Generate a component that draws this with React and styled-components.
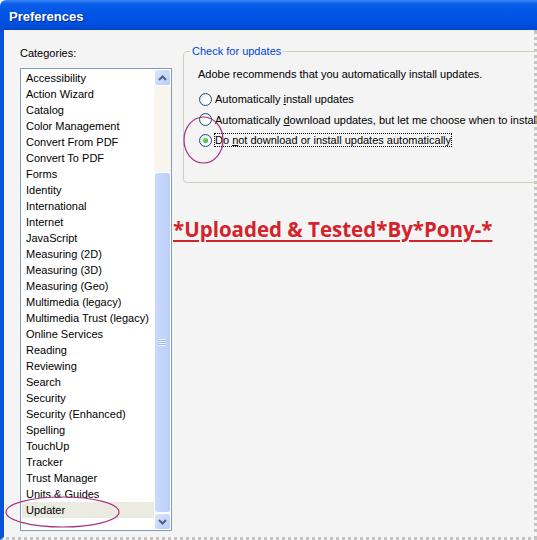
import React from "react";
import styled, { createGlobalStyle } from "styled-components";

const categories = [
  "Accessibility",
  "Action Wizard",
  "Catalog",
  "Color Management",
  "Convert From PDF",
  "Convert To PDF",
  "Forms",
  "Identity",
  "International",
  "Internet",
  "JavaScript",
  "Measuring (2D)",
  "Measuring (3D)",
  "Measuring (Geo)",
  "Multimedia (legacy)",
  "Multimedia Trust (legacy)",
  "Online Services",
  "Reading",
  "Reviewing",
  "Search",
  "Security",
  "Security (Enhanced)",
  "Spelling",
  "TouchUp",
  "Tracker",
  "Trust Manager",
  "Units & Guides",
  "Updater",
];

const Global = createGlobalStyle`
  body {
    margin: 0;
    background: #ffffff;
  }
`;

const App = () => {
  return (
    <Window>
      <Global />
      <TitleBar>
        <Title>Preferences</Title>
      </TitleBar>
      <Body>
        <Sidebar>
          <Label>Categories:</Label>
          <ListBox>
            <List>
              {categories.map((name) => (
                <Item key={name} selected={name === "Updater"}>
                  {name}
                </Item>
              ))}
            </List>
            <ScrollBar>
              <ScrollButton>
                <Arrow viewBox="0 0 9 6">
                  <path d="M1 5 L4.5 1.5 L8 5" />
                </Arrow>
              </ScrollButton>
              <Track />
              <Thumb>
                <Grip />
              </Thumb>
              <ScrollButton>
                <Arrow viewBox="0 0 9 6">
                  <path d="M1 1 L4.5 4.5 L8 1" />
                </Arrow>
              </ScrollButton>
            </ScrollBar>
          </ListBox>
        </Sidebar>
        <Main>
          <Group>
            <Legend>Check for updates</Legend>
            <Note>Adobe recommends that you automatically install updates.</Note>
            <Option>
              <Radio />
              <span>
                Automatically <u>i</u>nstall updates
              </span>
            </Option>
            <Option>
              <Radio />
              <span>
                Automatically <u>d</u>ownload updates, but let me choose when
                to install them
              </span>
            </Option>
            <Option>
              <Radio checked />
              <Focus>
                Do <u>n</u>ot download or install updates automatically
              </Focus>
            </Option>
          </Group>
          <Stamp>*Uploaded &amp; Tested*By*Pony-*</Stamp>
        </Main>
      </Body>
      <Marks width="537" height="540" viewBox="0 0 537 540">
        <ellipse cx="203.5" cy="140" rx="19.5" ry="23" />
        <ellipse cx="62.5" cy="512" rx="56.5" ry="15" />
      </Marks>
    </Window>
  );
};

export default App;

const Window = styled.div`
  position: relative;
  width: 537px;
  height: 540px;
  overflow: hidden;
  display: flex;
  flex-direction: column;
  font-family: "Liberation Sans", Arial, sans-serif;
  font-size: 11px;
  color: #000;
`;

const TitleBar = styled.div`
  height: 30px;
  flex: none;
  box-sizing: border-box;
  display: flex;
  align-items: center;
  padding: 3px 0 0 9px;
  border-radius: 6px 0 0 0;
  background: linear-gradient(
    to bottom,
    #3d86f5 0%,
    #0a5ee8 12%,
    #0055e5 45%,
    #0050e0 80%,
    #0046d0 100%
  );
`;

const Title = styled.span`
  color: #fff;
  font-family: "Liberation Sans", Arial, sans-serif;
  font-weight: bold;
  font-size: 13px;
  text-shadow: 1px 1px 0 #0a2a8a;
`;

const Body = styled.div`
  flex: 1;
  display: flex;
  background: #f4f4f4;
  border-left: 4px solid #0653d9;
  border-right: 3px dotted #c4c4c4;
  border-bottom: 3px dotted #c4c4c4;
  min-height: 0;
`;

const Sidebar = styled.div`
  flex: none;
  display: flex;
  flex-direction: column;
  padding: 16px 0 0 16px;
`;

const Label = styled.div`
  height: 14px;
  line-height: 14px;
  margin-bottom: 8px;
`;

const ListBox = styled.div`
  display: flex;
  width: 150px;
  height: 461px;
  border: 1px solid #7f9db9;
  background: #fff;
`;

const List = styled.ul`
  flex: 1;
  min-width: 0;
  overflow: hidden;
  list-style: none;
  margin: 0;
  padding: 1px 0 0 1px;
`;

const Item = styled.li`
  height: 16px;
  line-height: 16px;
  padding-left: 4px;
  white-space: nowrap;
  background: ${(p) => (p.selected ? "#ecebe1" : "transparent")};
`;

const ScrollBar = styled.div`
  width: 17px;
  flex: none;
  display: flex;
  flex-direction: column;
  background: #fbfaf5;
`;

const ScrollButton = styled.div`
  height: 17px;
  flex: none;
  box-sizing: border-box;
  display: flex;
  align-items: center;
  justify-content: center;
  border: 1px solid #fff;
  border-radius: 3px;
  background: linear-gradient(to bottom right, #dbe6fd, #b8cdf8);
`;

const Arrow = styled.svg`
  width: 9px;
  height: 6px;
  fill: none;
  stroke: #4d6185;
  stroke-width: 2;
`;

const Track = styled.div`
  height: 86px;
  flex: none;
  background: #f8f6ec;
`;

const Thumb = styled.div`
  flex: 1;
  display: flex;
  align-items: center;
  justify-content: center;
  box-sizing: border-box;
  border: 1px solid #fff;
  border-radius: 3px;
  background: linear-gradient(to right, #cbdafc, #bccff9);
`;

const Grip = styled.div`
  width: 7px;
  height: 7px;
  background: repeating-linear-gradient(
    to bottom,
    #eef3fe 0px,
    #eef3fe 1px,
    #9fb7ea 1px,
    #9fb7ea 2px
  );
`;

const Main = styled.div`
  flex: 1;
  min-width: 0;
  padding: 14px 0 0 0;
  display: flex;
  flex-direction: column;
`;

const Group = styled.fieldset`
  margin: 0 0 0 11px;
  width: 440px;
  height: 139px;
  box-sizing: border-box;
  padding: 9px 0 0 14px;
  border: 1px solid #d0d0bf;
  border-radius: 4px;
`;

const Legend = styled.legend`
  color: #0046d5;
  padding: 0 2px;
  margin-left: -8px;
  line-height: 14px;
`;

const Note = styled.div`
  line-height: 14px;
  margin-bottom: 8px;
  white-space: nowrap;
`;

const Option = styled.div`
  display: flex;
  align-items: center;
  gap: 3px;
  height: 20.5px;
  margin-left: 1px;
  white-space: nowrap;
`;

const Radio = styled.span`
  flex: none;
  position: relative;
  width: 13px;
  height: 13px;
  box-sizing: border-box;
  border-radius: 50%;
  border: 1px solid #1c5180;
  background: radial-gradient(circle at 65% 65%, #ffffff 30%, #dcdcd6 100%);

  &::after {
    content: "";
    display: ${(p) => (p.checked ? "block" : "none")};
    position: absolute;
    left: 3px;
    top: 3px;
    width: 5px;
    height: 5px;
    border-radius: 50%;
    background: radial-gradient(circle at 40% 40%, #6ee06e, #21a121);
  }
`;

const Focus = styled.span`
  outline: 1px dotted #000;
  outline-offset: 0;
`;

const Stamp = styled.div`
  margin: 32px 0 0 1px;
  font-family: "Open Sans", "Liberation Sans", sans-serif;
  font-weight: bold;
  font-size: 20.5px;
  color: #d3232b;
  text-decoration: underline;
  text-decoration-thickness: 2px;
  text-underline-offset: 3px;
  white-space: nowrap;
`;

const Marks = styled.svg`
  position: absolute;
  left: 0;
  top: 0;
  pointer-events: none;
  fill: none;
  stroke: #a8327e;
  stroke-width: 1.2;
`;
